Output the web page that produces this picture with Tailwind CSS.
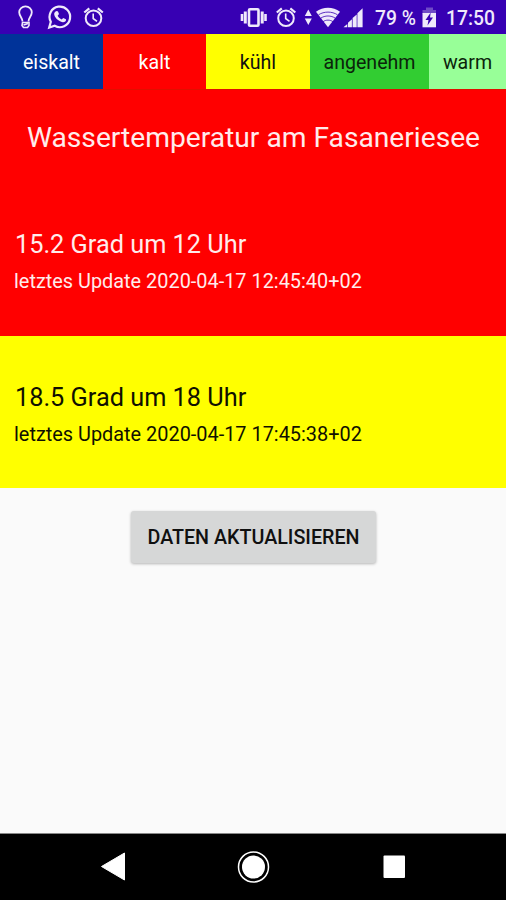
<!DOCTYPE html>
<html lang="de">
<head>
    <meta charset="utf-8">
    <meta name="viewport" content="width=device-width, initial-scale=1">
    <title>Wassertemperatur am Fasaneriesee</title>
    <script src="https://cdn.jsdelivr.net/npm/@tailwindcss/browser@4"></script>
</head>
<body class="bg-[#fafafa] font-[Roboto,sans-serif]">
<div class="w-[506px] h-[900px] flex flex-col overflow-hidden">
    <!-- status bar -->
    <div class="h-[34px] shrink-0 bg-[#3700b3] text-[#efe9fb] flex items-center">
        <svg class="w-[120px] h-[34px] shrink-0" viewBox="0 0 120 34" fill="none" stroke="currentColor" stroke-width="1.8">
            <path d="M22.500 21.500C22.300 17.500 19.200 16 19.200 12.300A6.300 6 0 0 1 31.800 12.300C31.800 16 28.700 17.500 28.500 21.500"/>
            <path d="M22.500 22.500H29V25.500L27.500 27.500H23.500L22 25.500Z" stroke-width="1.600"/>
            <path d="M23.500 25L28 23.500"/>
            <path d="M49.200 27.500L50.800 21.800A10.300 10.300 0 1 1 54.700 25.800Z" stroke-width="2.200"/>
            <path d="M55.500 11.500C56.500 10.600 57.700 10.800 58.100 11.800L59 14L57.700 15.800C58.500 17.600 60 18.900 61.700 19.500L63.200 17.900L66 19.200C66.500 21.200 64.500 22.300 62.800 22.200C58.500 21.700 53.800 16.800 54.200 13.500C54.300 12.700 54.800 12 55.500 11.500Z" fill="currentColor" stroke="none"/>
            <circle cx="93.500" cy="18.200" r="7.800" stroke-width="2"/>
            <path d="M93.200 13.500V18.500L97 21.300" stroke-width="1.600"/>
            <path d="M84.300 12.500L89.300 8.300M97.800 8.300L102.800 12.500" stroke-width="2.200"/>
        </svg>
        <svg class="w-[130px] h-[34px] ml-[120px] shrink-0" viewBox="240 0 130 34" fill="none" stroke="currentColor" stroke-width="1.8">
            <rect x="249" y="9.200" width="9.500" height="16.600" rx="1" stroke-width="2.600"/>
            <path d="M245.300 11.500V23.500M262.200 11.500V23.500" stroke-width="3"/>
            <path d="M242 14V21M265.500 14V21" stroke-width="2.600"/>
            <circle cx="286" cy="18.200" r="7.800" stroke-width="2"/>
            <path d="M285.700 13.500V18.500L289.500 21.300" stroke-width="1.600"/>
            <path d="M276.800 12.500L281.800 8.300M290.300 8.300L295.300 12.500" stroke-width="2.200"/>
            <path d="M304.800 16L308.300 9.500L311.800 16ZM304.800 18.500L308.300 25L311.800 18.500Z" fill="currentColor" stroke="none"/>
            <path d="M316 11.800C323 6.500 333 6.500 340 11.800L328 27.300Z" fill="currentColor" stroke="none"/>
            <path d="M318.500 14.800C324 11.200 332 11.200 337.500 14.800M320.500 18.300C325 15.200 331 15.200 335.500 18.300M323 21.700C326 19.600 330 19.600 333 21.700" stroke="#3700b3" stroke-width="0.800"/>
            <path d="M343.500 27.200L347.300 24V27.200ZM348 27.200V22.700L351.900 19.300V27.200ZM352.600 27.200V18L356.700 14.500V27.200ZM357.400 27.200V13.300L362.600 8.200V27.200Z" fill="currentColor" stroke="none"/>
        </svg>
        <span class="ml-[5px] w-[47px] text-[19.300px] font-medium whitespace-nowrap pt-[4px]">79 %</span>
        <svg class="w-[15px] h-[34px] shrink-0" viewBox="422 0 15 34">
            <path d="M426 7.500H433V10H436V14H422.500V10H426Z" fill="#6f4bc6"/>
            <path d="M422.500 13H436V27.300H422.500Z" fill="currentColor"/>
            <path d="M430.700 12.500L425.500 20H428.500L427.500 25.500L433 17.500H430Z" fill="#3700b3"/>
        </svg>
        <span class="ml-[9px] text-[19.300px] font-medium whitespace-nowrap pt-[4px]">17:50</span>
    </div>
    <!-- temperature scale -->
    <div class="h-[56px] shrink-0 grid grid-cols-[103px_103px_104px_119px_77px] text-[19.600px] text-[#101010] text-center leading-[58px] border-b border-[#e01000]">
        <div class="h-[55px] bg-[#003399] text-white">eiskalt</div>
        <div class="h-[55px] bg-[#ff0000] text-white">kalt</div>
        <div class="h-[55px] bg-[#ffff00]">kühl</div>
        <div class="h-[55px] bg-[#32cd32] text-[#0b240b]">angenehm</div>
        <div class="h-[55px] bg-[#98ff98] text-[#0b240b]">warm</div>
    </div>
    <!-- noon -->
    <div class="h-[246px] shrink-0 bg-[#ff0000] text-[#ffecec] px-[15px] pt-[30px]">
        <h1 class="ml-px text-[28.200px] leading-[36px] text-center whitespace-nowrap">Wassertemperatur am Fasaneriesee</h1>
        <p class="mt-[73px] text-[25.300px] leading-[32px]">15.2 Grad um 12 Uhr</p>
        <p class="mt-[8px] -ml-px text-[19.900px] leading-[26px]">letztes Update 2020-04-17 12:45:40+02</p>
    </div>
    <!-- evening -->
    <div class="h-[152px] shrink-0 bg-[#ffff00] text-[#101000] px-[15px] pt-[46px]">
        <p class="text-[25.300px] leading-[32px]">18.5 Grad um 18 Uhr</p>
        <p class="mt-[8px] -ml-px text-[19.900px] leading-[26px]">letztes Update 2020-04-17 17:45:38+02</p>
    </div>
    <div class="grow flex justify-center items-start pt-[23px]">
        <button class="w-[245px] h-[52px] mr-[-1px] pt-[2px] rounded-[3px] bg-[#d6d7d7] shadow-[0_1px_3px_rgba(0,0,0,0.28)] text-[19.700px] font-medium text-[#101010] whitespace-nowrap">DATEN AKTUALISIEREN</button>
    </div>
    <!-- navigation bar -->
    <div class="h-[67px] shrink-0 bg-black border-t border-[#888888]">
        <svg class="w-[506px] h-[66px]" viewBox="0 834 506 66" fill="#ffffff">
            <path d="M124.500 853V880L101.500 866.500Z" stroke="#ffffff" stroke-width="1" stroke-linejoin="round"/>
            <circle cx="253.500" cy="867" r="11.500"/>
            <circle cx="253.500" cy="867" r="15" fill="none" stroke="#ffffff" stroke-width="1.500"/>
            <rect x="383.500" y="855.500" width="21.500" height="22.500" rx="1"/>
        </svg>
    </div>
</div>
</body>
</html>
